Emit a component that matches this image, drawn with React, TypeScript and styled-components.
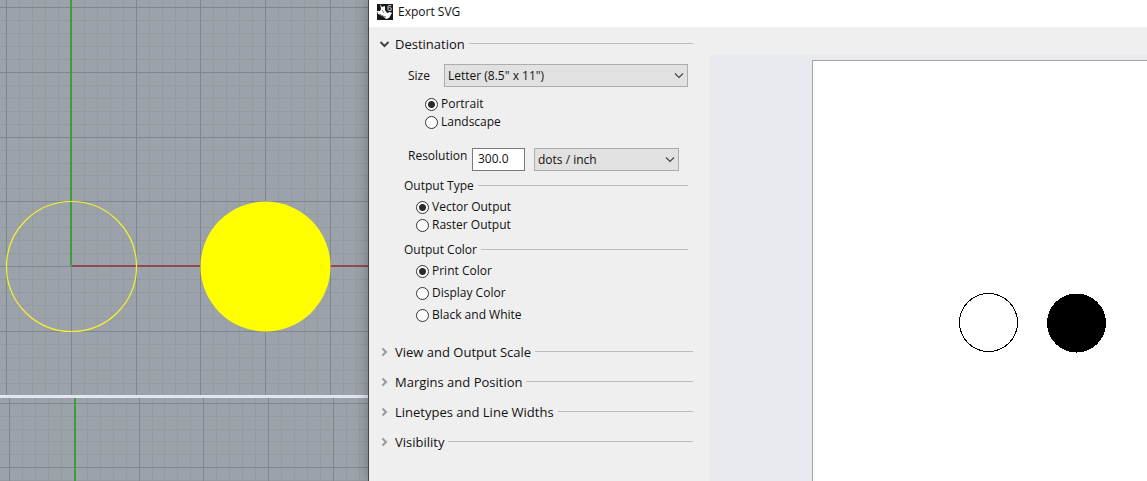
import React, { useId, useState } from "react";
import styled, { createGlobalStyle } from "styled-components";

const GlobalStyle = createGlobalStyle`
  * { box-sizing: border-box; }
  body {
    margin: 0;
    background: #efefef;
    color: #111;
    font: 12px/16px "Open Sans", "Noto Sans", sans-serif;
  }
`;

/* ---------- layout ---------- */

const Screen = styled.main`
  display: grid;
  grid-template-columns: minmax(0, 368fr) minmax(0, 779fr);
  min-height: 100vh;
`;

const Viewports = styled.section`
  display: flex;
  flex-direction: column;
  gap: 3px;
  background: #e2e6f0;
`;

const Canvas = styled.svg<{ $share: number }>`
  display: block;
  flex: ${(p) => p.$share} 1 0;
  width: 100%;
  min-height: 0;
  background: #9ca2a9;
`;

const Dialog = styled.section`
  display: flex;
  flex-direction: column;
  border-left: 1px solid #444;
  background: #efefef;
  box-shadow: 0 0 12px rgba(0, 0, 0, 0.3);
`;

const TitleBar = styled.header`
  display: flex;
  align-items: center;
  gap: 5px;
  height: 27px;
  padding: 0 8px 4px;
  background: #fff;
`;

const Title = styled.h1`
  margin: 0;
  font: inherit;
`;

const DialogBody = styled.div`
  display: flex;
  flex: 1;
`;

const Settings = styled.form`
  flex: 0 0 341px;
  padding: 2px 17px 0 10px;
`;

const Preview = styled.div`
  display: flex;
  flex: 1;
  min-width: 0;
  margin-top: 28px;
  padding: 5px 0 0 102px;
  background: #e9eaef;
`;

const Paper = styled.svg`
  display: block;
  flex: 1;
  min-width: 0;
  height: auto;
  border: solid #a6a6aa;
  border-width: 1px 0 0 1px;
  background: #fff;
`;

/* ---------- form parts ---------- */

const SectionButton = styled.button`
  display: flex;
  align-items: center;
  width: 100%;
  height: 30px;
  padding: 0;
  border: 0;
  background: none;
  color: #111;
  font: 13px/20px "Open Sans", "Noto Sans", sans-serif;
  text-align: left;

  svg { flex: none; margin-right: 5px; }
`;

const Rule = styled.span`
  flex: 1;
  height: 1px;
  margin: 0 0 2px 4px;
  background: #bdbdbd;
`;

const SectionBody = styled.div`
  padding: 5px 5px 11px 25px;
`;

const FieldRow = styled.div<{ $top?: boolean }>`
  display: flex;
  align-items: ${(p) => (p.$top ? "flex-start" : "center")};
  padding-left: 4px;
`;

const FieldLabel = styled.label<{ $width: number }>`
  flex: 0 0 ${(p) => p.$width}px;
`;

const SelectBox = styled.span<{ $width?: number }>`
  display: grid;
  flex: ${(p) => (p.$width ? `0 0 ${p.$width}px` : "1")};
  align-items: center;

  > * { grid-area: 1 / 1; }
  > svg { justify-self: end; margin-right: 4px; pointer-events: none; }
`;

const Select = styled.select`
  appearance: none;
  width: 100%;
  height: 23px;
  padding: 0 20px 0 3px;
  border: 1px solid #adadad;
  border-radius: 0;
  background: #e1e1e1;
  color: #111;
  font: inherit;
`;

const NumberBox = styled.input`
  width: 53px;
  height: 23px;
  margin-right: 9px;
  padding: 0 5px 2px;
  border: 1px solid #7a7a7a;
  background: #fff;
  color: #111;
  font: inherit;
`;

const RadioList = styled.div<{ $indent: number; $gap: number }>`
  padding: ${(p) => p.$gap}px 0 0 ${(p) => p.$indent}px;
`;

const RadioRow = styled.label<{ $tall?: boolean }>`
  display: flex;
  align-items: center;
  gap: 3px;
  height: ${(p) => (p.$tall ? 22 : 18)}px;
`;

const RadioInput = styled.input`
  appearance: none;
  width: 13px;
  height: 13px;
  margin: 0;
  border: 1px solid #333;
  border-radius: 50%;
  background: #fff;

  &:checked {
    background: radial-gradient(circle, #2b2b2b 3px, #fff 4px);
  }
`;

const Group = styled.fieldset<{ $gap: number }>`
  min-width: 0;
  margin: 0;
  padding: ${(p) => p.$gap}px 0 0;
  border: 0;
`;

const GroupTitle = styled.div`
  display: flex;
  align-items: center;
  height: 18px;
`;

const Resolution = styled.div`
  padding-top: 17px;
`;

/* ---------- drawings ---------- */

const RhinoIcon = () => (
  <svg width="16" height="16" viewBox="0 0 16 16" aria-hidden="true">
    <rect width="16" height="16" fill="#15171a" />
    <path
      d="M3 0 5 3 8 2 8 6 10 9 13 8 15 9 12 14 9 15 6 12 1 10 0 7 3 7 4 5Z"
      fill="#fff"
    />
    <path d="M2 10 6 12 9 13M5 6 7 9" stroke="#888" fill="none" />
    <text x="10" y="7" fontSize="9" fontFamily="Liberation Sans, sans-serif" fill="#e0e0e0">6</text>
  </svg>
);

const Chevron = ({ open }: { open?: boolean }) => (
  <svg width="11" height="10" viewBox="0 0 11 10" fill="none" strokeWidth="2" aria-hidden="true">
    {open ? (
      <path d="M1.500 3 5.500 7 9.500 3" stroke="#444" />
    ) : (
      <path d="M3.500 1.500 7 5 3.500 8.500" stroke="#999" />
    )}
  </svg>
);

const SelectArrow = () => (
  <svg width="10" height="7" viewBox="0 0 10 7" fill="none" aria-hidden="true">
    <path d="M1 1.500 5 5.500 9 1.500" stroke="#444" strokeWidth="1.200" />
  </svg>
);

const MAJOR = 64.75;
const MINOR = MAJOR / 5;

function GridLines({ x, y }: { x: number; y: number }) {
  const lines: React.ReactElement[] = [];
  const draw = (major: boolean) => {
    for (let i = -40; i < 160; i++) {
      if ((i % 5 === 0) !== major) continue;
      const gx = Math.floor(x + i * MINOR) + 0.5;
      const gy = Math.floor(y + i * MINOR) + 0.5;
      const stroke = major ? "#80868d" : "#939aa0";
      lines.push(
        <line key={`v${i}`} x1={gx} x2={gx} y1="0" y2="100%" stroke={stroke} />,
        <line key={`h${i}`} y1={gy} y2={gy} x1="0" x2="100%" stroke={stroke} />
      );
    }
  };
  draw(false);
  draw(true);
  return <g>{lines}</g>;
}

/* ---------- controls ---------- */

type RadiosProps = {
  name: string;
  label: string;
  options: string[];
  tall?: boolean;
  indent: number;
  gap: number;
};

function Radios({ name, label, options, tall, indent, gap }: RadiosProps) {
  const [value, setValue] = useState(options[0]);
  return (
    <RadioList role="radiogroup" aria-label={label} $indent={indent} $gap={gap}>
      {options.map((o) => (
        <RadioRow key={o} $tall={tall}>
          <RadioInput type="radio" name={name} checked={value === o} onChange={() => setValue(o)} />
          {o}
        </RadioRow>
      ))}
    </RadioList>
  );
}

function DropDown({ id, label, option, width }: { id: string; label?: string; option: string; width?: number }) {
  return (
    <SelectBox $width={width}>
      <Select id={id} aria-label={label}>
        <option>{option}</option>
      </Select>
      <SelectArrow />
    </SelectBox>
  );
}

function Section({ title, open, children }: { title: string; open?: boolean; children?: React.ReactNode }) {
  const [shown, setShown] = useState(!!open);
  return (
    <>
      <SectionButton type="button" aria-expanded={shown} onClick={() => setShown(!shown)}>
        <Chevron open={shown} />
        {title}
        <Rule />
      </SectionButton>
      {shown && children && <SectionBody>{children}</SectionBody>}
    </>
  );
}

export default function App() {
  const id = useId();
  return (
    <>
      <GlobalStyle />
      <Screen>
        <Viewports aria-label="Viewports">
          <Canvas $share={395}>
            <GridLines x={71.4} y={266.6} />
            <path d="M71 0V266" stroke="#3f9a40" strokeWidth="2" />
            <line x1="72" x2="100%" y1="266" y2="266" stroke="#914b50" strokeWidth="2" />
            <circle cx="71.500" cy="266.500" r="65" fill="none" stroke="#f4f32a" strokeWidth="1.200" />
            <circle cx="265.500" cy="266.500" r="65" fill="#ff0" />
          </Canvas>
          <Canvas $share={83}>
            <GridLines x={74.3} y={5.1} />
            <path d="M75 0V2000" stroke="#3f9a40" strokeWidth="2" />
          </Canvas>
        </Viewports>
        <Dialog aria-label="Export SVG">
          <TitleBar>
            <RhinoIcon />
            <Title>Export SVG</Title>
          </TitleBar>
          <DialogBody>
            <Settings>
              <Section title="Destination" open>
                <FieldRow>
                  <FieldLabel $width={36} htmlFor={`${id}size`}>Size</FieldLabel>
                  <DropDown id={`${id}size`} option={'Letter (8.5" x 11")'} />
                </FieldRow>
                <Radios name="orientation" label="Orientation" options={["Portrait", "Landscape"]} indent={21} gap={8} />
                <Resolution>
                  <FieldRow $top>
                    <FieldLabel $width={64} htmlFor={`${id}res`}>Resolution</FieldLabel>
                    <NumberBox id={`${id}res`} type="text" defaultValue="300.0" />
                    <DropDown id={`${id}unit`} label="Resolution unit" option="dots / inch" width={145} />
                  </FieldRow>
                </Resolution>
                <Group $gap={6}>
                  <GroupTitle>Output Type<Rule /></GroupTitle>
                  <Radios name="type" label="Output Type" options={["Vector Output", "Raster Output"]} indent={12} gap={3} />
                </Group>
                <Group $gap={7}>
                  <GroupTitle>Output Color<Rule /></GroupTitle>
                  <Radios name="color" label="Output Color" options={["Print Color", "Display Color", "Black and White"]} tall indent={12} gap={1} />
                </Group>
              </Section>
              <Section title="View and Output Scale" />
              <Section title="Margins and Position" />
              <Section title="Linetypes and Line Widths" />
              <Section title="Visibility" />
            </Settings>
            <Preview>
              <Paper shapeRendering="crispEdges">
                <circle cx="175.500" cy="261.500" r="29" fill="none" stroke="#000" />
                <circle cx="263.500" cy="262" r="29.500" fill="#000" />
              </Paper>
            </Preview>
          </DialogBody>
        </Dialog>
      </Screen>
    </>
  );
}
